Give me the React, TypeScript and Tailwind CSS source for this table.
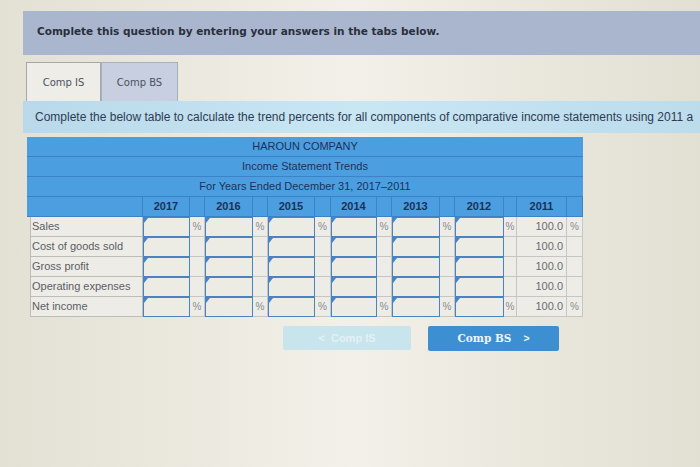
import React from "react";

type Col = { w: string; year?: string; pct?: boolean };

const cols: Col[] = [
  { w: "w-[47px]", year: "2017" },
  { w: "w-[15px]", pct: true },
  { w: "w-[48px]", year: "2016" },
  { w: "w-[15px]", pct: true },
  { w: "w-[47px]", year: "2015" },
  { w: "w-[16px]", pct: true },
  { w: "w-[46px]", year: "2014" },
  { w: "w-[15px]", pct: true },
  { w: "w-[48px]", year: "2013" },
  { w: "w-[15px]", pct: true },
  { w: "w-[49px]", year: "2012" },
  { w: "w-[13px]", pct: true },
  { w: "w-[50px]", year: "2011" },
  { w: "w-[16px]", pct: true },
];

const rows = ["Sales", "Cost of goods sold", "Gross profit", "Operating expenses", "Net income"];

const HeaderRow = ({ text }: { text: string }) => (
  <div className="h-[20px] w-full bg-[#4b9fe0] border-b border-[#3c82c6] flex items-center justify-center text-[11px] text-[#1d3158]">
    {text}
  </div>
);

const InputBox = () => (
  <div className="relative h-full w-full border-[1.5px] border-[#4d82c2] bg-[#ecebe4]">
    <div className="absolute left-0 top-0 h-0 w-0 border-t-[5px] border-r-[4px] border-t-[#3f86d6] border-r-transparent" />
  </div>
);

export default function App() {
  return (
    <div className="min-h-[467px] w-[700px] bg-[#e9e6dc] bg-gradient-to-r from-[#e3e0d4] via-[#f2f0e8] to-[#e2dfd3] font-['Liberation_Sans',Arial,sans-serif] pt-[11px] pl-[23px] overflow-hidden">
      {/* banner */}
      <div className="h-[44px] bg-[#a9b6cd] flex items-center pl-[14px] pb-[3px]">
        <span className="font-['DejaVu_Sans',Verdana,sans-serif] font-bold text-[10.5px] text-[#2a2f3e]">
          Complete this question by entering your answers in the tabs below.
        </span>
      </div>

      {/* tabs */}
      <div className="mt-[7px] flex items-end pl-[3px]">
        <div className="h-[39px] w-[75px] border border-[#a7a7a7] border-b-0 bg-[#eeede7] flex items-center justify-center font-['DejaVu_Sans',Verdana,sans-serif] text-[10px] text-[#4c5262]">
          Comp IS
        </div>
        <div className="h-[39px] w-[77px] border border-[#a7b0c2] border-b-0 bg-[#c7cfe0] flex items-center justify-center font-['DejaVu_Sans',Verdana,sans-serif] text-[10px] text-[#4c5262]">
          Comp BS
        </div>
      </div>

      {/* instruction */}
      <div className="h-[32px] w-[677px] bg-gradient-to-r from-[#b9d9ea] via-[#c9e6f3] to-[#bcdcec] flex items-center pl-[12px] whitespace-nowrap overflow-hidden">
        <span className="text-[12px] text-[#2f3b52]">
          Complete the below table to calculate the trend percents for all components of comparative income statements using 2011 a
        </span>
      </div>

      {/* table */}
      <div className="ml-[4px] mt-[4px] w-[556px]">
        <HeaderRow text="HAROUN COMPANY" />
        <HeaderRow text="Income Statement Trends" />
        <HeaderRow text="For Years Ended December 31, 2017–2011" />
        <div className="flex h-[20px] bg-[#4b9fe0] border-b border-[#3c82c6]">
          <div className="w-[116px] border-r border-[#3c82c6]" />
          {cols.map((c, i) => (
            <div
              key={i}
              className={`${c.w} border-r border-[#3c82c6] flex items-center justify-center text-[11px] font-bold text-[#1d3158]`}
            >
              {c.year ?? ""}
            </div>
          ))}
        </div>
        {rows.map((r, ri) => {
          const showPct = ri === 0 || ri === rows.length - 1;
          return (
            <div key={r} className="flex h-[20px]">
              <div className="w-[116px] pl-[3px]">
                <div className="h-full border border-t-0 border-[#bcbcb8] bg-[#edece6] flex items-center pl-[1px] text-[11px] text-[#5b5e66] whitespace-nowrap">
                  {r}
                </div>
              </div>
              {cols.map((c, i) => {
                if (c.pct) {
                  return (
                    <div
                      key={i}
                      className={`${c.w} border-b border-r border-[#c6c6c2] bg-[#edece6] flex items-center justify-center text-[10px] text-[#8a8c92]`}
                    >
                      {showPct ? "%" : ""}
                    </div>
                  );
                }
                if (c.year === "2011") {
                  return (
                    <div
                      key={i}
                      className={`${c.w} border-b border-r border-[#c6c6c2] bg-[#edece6] flex items-center justify-end pr-[3px] text-[11px] text-[#6a6d74]`}
                    >
                      100.0
                    </div>
                  );
                }
                return (
                  <div key={i} className={`${c.w} h-[20px]`}>
                    <InputBox />
                  </div>
                );
              })}
            </div>
          );
        })}
      </div>

      {/* buttons */}
      <div className="mt-[9px] flex pl-[260px] gap-[17px]">
        <div className="h-[24px] w-[128px] rounded-[2px] bg-[#c8e5ee] flex items-center justify-center text-[11px] font-bold text-[#e2f1f5]">
          &lt;&nbsp;&nbsp;Comp IS
        </div>
        <div className="h-[25px] w-[131px] rounded-[2px] bg-[#3c90d2] flex items-center justify-center text-[10.5px] font-bold text-[#eef5fb] font-['DejaVu_Serif',serif]">
          Comp BS<span className="ml-[12px] font-['Liberation_Sans',sans-serif]">&gt;</span>
        </div>
      </div>
    </div>
  );
}
